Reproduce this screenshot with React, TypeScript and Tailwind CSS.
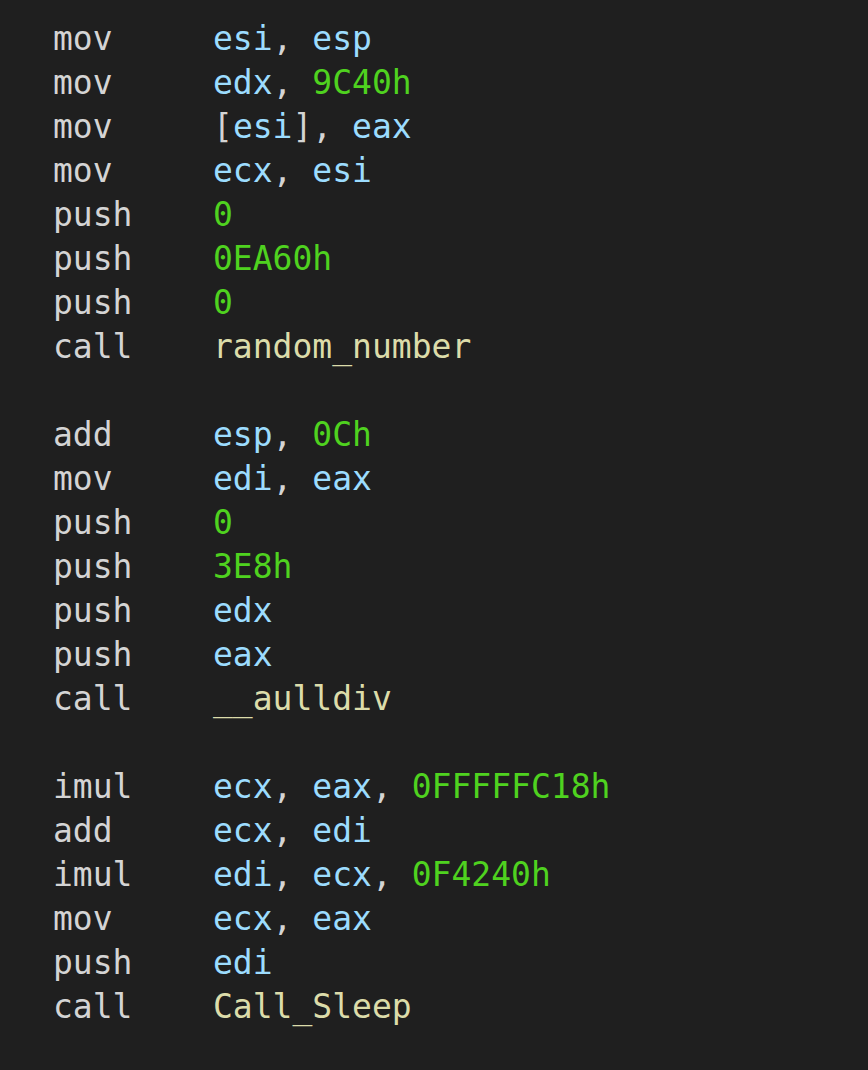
type Tok = { t: string; c: string };

const REG = "text-[#9cdcfe]";
const NUM = "text-[#4fd21f]";
const FN = "text-[#dcdcaa]";
const PUN = "text-[#d4d4d4]";

// tiny tokenizer for operand text
const tokenize = (s: string): Tok[] => {
  const parts = s.match(/[A-Za-z_][A-Za-z0-9_]*|[0-9][0-9A-Fa-f]*h?|[^A-Za-z0-9_]+/g) || [];
  return parts.map((p) => {
    if (/^[0-9]/.test(p)) return { t: p, c: NUM };
    if (/^(e[abcd]x|e[sd]i|esp|ebp)$/.test(p)) return { t: p, c: REG };
    if (/^[A-Za-z_]/.test(p)) return { t: p, c: FN };
    return { t: p, c: PUN };
  });
};

const lines: ([string, string] | null)[] = [
  ["mov", "esi, esp"],
  ["mov", "edx, 9C40h"],
  ["mov", "[esi], eax"],
  ["mov", "ecx, esi"],
  ["push", "0"],
  ["push", "0EA60h"],
  ["push", "0"],
  ["call", "random_number"],
  null,
  ["add", "esp, 0Ch"],
  ["mov", "edi, eax"],
  ["push", "0"],
  ["push", "3E8h"],
  ["push", "edx"],
  ["push", "eax"],
  ["call", "__aulldiv"],
  null,
  ["imul", "ecx, eax, 0FFFFFC18h"],
  ["add", "ecx, edi"],
  ["imul", "edi, ecx, 0F4240h"],
  ["mov", "ecx, eax"],
  ["push", "edi"],
  ["call", "Call_Sleep"],
];

export default function App() {
  return (
    <div className="w-[868px] h-[1070px] bg-[#1f1f1f] pl-[53px] pt-[17px] font-['DejaVu_Sans_Mono',monospace] text-[33px] leading-[44px] whitespace-pre">
      {lines.map((ln, i) =>
        ln ? (
          <div key={i} className="flex h-[44px]">
            <span className="w-[160px] shrink-0 text-[#d4d4d4]">{ln[0]}</span>
            <span>
              {tokenize(ln[1]).map((tk, j) => (
                <span key={j} className={tk.c}>
                  {tk.t}
                </span>
              ))}
            </span>
          </div>
        ) : (
          <div key={i} className="h-[44px]" />
        )
      )}
    </div>
  );
}
